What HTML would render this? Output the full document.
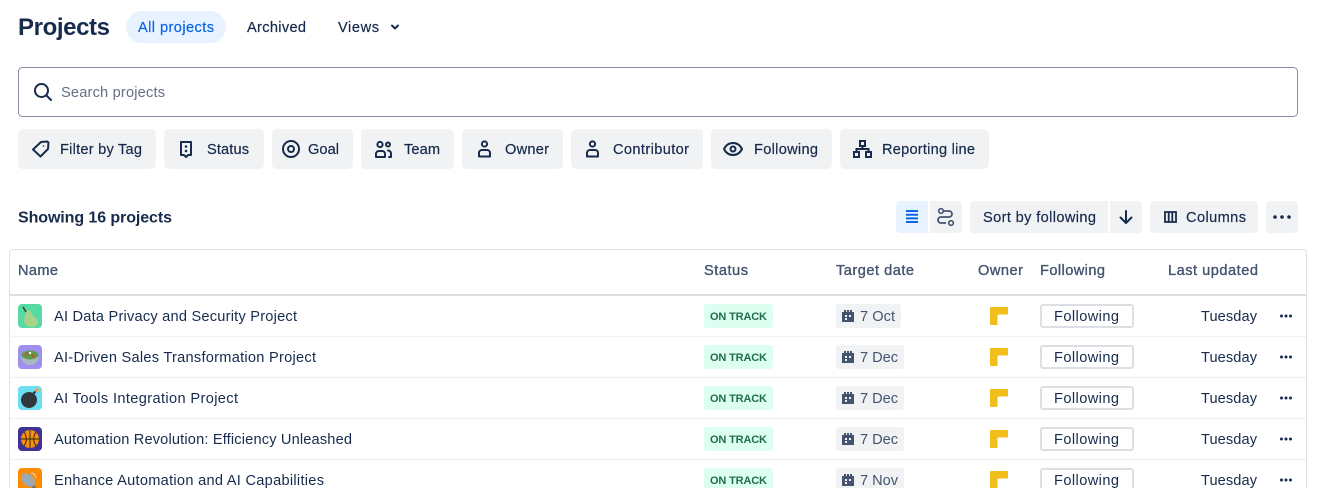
<!DOCTYPE html>
<html><head><meta charset="utf-8"><title>Projects</title>
<style>
html,body{margin:0;padding:0;background:#fff;width:1333px;height:488px;overflow:hidden}
svg{display:block;font-family:"Liberation Sans",sans-serif}
text{fill:#172B4D;font-size:14.6px}
.m{stroke:#172B4D;stroke-width:.2}
.s{font-weight:700}
.h{fill:#44546F;stroke:#44546F;stroke-width:.35}
.i{fill:none;stroke:#172B4D;stroke-width:2;stroke-linecap:round;stroke-linejoin:round}
.b{fill:#F1F2F4}
.l{fill:#DCFFF1}
.lt{fill:#216E4E;font-size:11px;font-weight:700}
.d{fill:#44546F}
</style></head><body>
<svg width="1333" height="488" viewBox="0 0 1333 488" xmlns="http://www.w3.org/2000/svg">
<defs>
<g id="cal"><path fill="#44546F" d="M0 2h2V0h2v2h1V0h2v2h1V0h2v2h2v10H0z"/><path fill="#F1F2F4" d="M3 5h2v2H3zM7 5h2v2H7zM3 8h2v2H3z"/></g>
<path id="logo" fill="#F1BE1C" d="M1 0h16a1 1 0 0 1 1 1v5.500a1 1 0 0 1-1 1H8.500a1 1 0 0 0-1 1V17a1 1 0 0 1-1 1H1a1 1 0 0 1-1-1V1a1 1 0 0 1 1-1z"/>
<g id="more"><circle cx="2" cy="2" r="1.500" fill="#172B4D"/><circle cx="6.500" cy="2" r="1.500" fill="#172B4D"/><circle cx="11" cy="2" r="1.500" fill="#172B4D"/></g>
<g id="person"><circle cx="6.500" cy="3" r="2.600" fill="none" stroke="#172B4D" stroke-width="2"/><path d="M1 15.500v-3.500a3 3 0 0 1 3-3h5a3 3 0 0 1 3 3v3.500z" fill="none" stroke="#172B4D" stroke-width="2" stroke-linejoin="round"/></g>
</defs>

<text x="18" y="35" class="s" style="font-size:24px" textLength="92">Projects</text>
<rect x="126" y="11" width="100" height="32" rx="16" fill="#E9F2FF"/>
<text x="138" y="32" textLength="76" style="fill:#0C66E4;stroke:#0C66E4;stroke-width:.2">All projects</text>
<text x="247" y="32" class="m" textLength="59">Archived</text>
<text x="338" y="32" class="m" textLength="41">Views</text>
<path class="i" d="M392 25.500l3 3 3-3"/>

<rect x="18.500" y="67.500" width="1279" height="49" rx="4" fill="#fff" stroke="#8590A2"/>
<circle cx="41.500" cy="90.500" r="6.500" class="i"/><path class="i" d="M46.500 95.500l4.500 4.500"/>
<text x="61" y="97" textLength="104" style="fill:#626F86">Search projects</text>

<rect class="b" x="18" y="129" width="138" height="40" rx="5"/>
<path class="i" d="M33 149.500l8-7.500 6-.5 1.500 1-.5 6.500-7.500 7.500z"/><circle cx="43.500" cy="146" r=".8" fill="#172B4D"/>
<text x="60" y="154" class="m" textLength="82">Filter by Tag</text>
<rect class="b" x="164" y="129" width="100" height="40" rx="5"/>
<path class="i" d="M181 142h10v13h-3l-2 2-2-2h-3z"/><circle cx="186" cy="146.500" r="1.300" fill="#172B4D"/><circle cx="186" cy="151" r="1.300" fill="#172B4D"/>
<text x="207" y="154" class="m" textLength="42">Status</text>
<rect class="b" x="272" y="129" width="81" height="40" rx="5"/>
<circle cx="291" cy="149" r="8" class="i"/><circle cx="291" cy="149" r="3" class="i"/>
<text x="308" y="154" class="m" textLength="31">Goal</text>
<rect class="b" x="361" y="129" width="93" height="40" rx="5"/>
<circle cx="380" cy="144.500" r="2.600" class="i"/><circle cx="388" cy="144.500" r="2" class="i"/><path class="i" d="M376 157v-3a3 3 0 0 1 3-3h3a3 3 0 0 1 3 3v3zM388 150.500a3 3 0 0 1 3 3v3.500h-2"/>
<text x="404" y="154" class="m" textLength="36">Team</text>
<rect class="b" x="462" y="129" width="101" height="40" rx="5"/>
<use href="#person" x="478" y="141"/>
<text x="505" y="154" class="m" textLength="44">Owner</text>
<rect class="b" x="571" y="129" width="132" height="40" rx="5"/>
<use href="#person" x="586" y="141"/>
<text x="613" y="154" class="m" textLength="76">Contributor</text>
<rect class="b" x="711" y="129" width="121" height="40" rx="5"/>
<path class="i" d="M724 149c2-4 5-6 9-6s7 2 9 6c-2 4-5 6-9 6s-7-2-9-6z"/><circle cx="733" cy="149" r="2.500" class="i"/>
<text x="754" y="154" class="m" textLength="64">Following</text>
<rect class="b" x="840" y="129" width="149" height="40" rx="5"/>
<path d="M860 141h5v5h-5zM854 152h5v5h-5zM866 152h5v5h-5z" fill="none" stroke="#172B4D" stroke-width="2"/><path d="M862.500 146v3M856.500 152v-3h12v3" fill="none" stroke="#172B4D" stroke-width="2"/>
<text x="882" y="154" class="m" textLength="93">Reporting line</text>

<text x="18" y="222.500" class="s" style="font-size:16px" textLength="154">Showing 16 projects</text>
<path d="M900 201h28v32h-28a4 4 0 0 1-4-4v-24a4 4 0 0 1 4-4z" fill="#E9F2FF"/>
<path d="M906 211h12M906 214.700h12M906 218.400h12M906 222h12" stroke="#0C66E4" stroke-width="2"/>
<path class="b" d="M930 201h28a4 4 0 0 1 4 4v24a4 4 0 0 1-4 4h-28z"/>
<path d="M941 211h8a3 3 0 0 1 0 6h-8a3 3 0 0 0 0 6h5" fill="none" stroke="#44546F" stroke-width="1.800"/><circle cx="941" cy="211" r="2.300" fill="#F1F2F4" stroke="#44546F" stroke-width="1.600"/><circle cx="951" cy="223" r="2.300" fill="#F1F2F4" stroke="#44546F" stroke-width="1.600"/>
<path class="b" d="M974 201h134v32h-134a4 4 0 0 1-4-4v-24a4 4 0 0 1 4-4z"/>
<text x="983" y="222" class="m" textLength="113">Sort by following</text>
<path class="b" d="M1110 201h28a4 4 0 0 1 4 4v24a4 4 0 0 1-4 4h-28z"/>
<path class="i" d="M1126 211v12M1120.500 217.500l5.500 5.500 5.500-5.500"/>
<rect class="b" x="1150" y="201" width="108" height="32" rx="4"/>
<path d="M1165 212h11v10h-11zM1168.700 212v10M1172.300 212v10" fill="none" stroke="#172B4D" stroke-width="1.800"/>
<text x="1186" y="222" class="m" textLength="60">Columns</text>
<rect class="b" x="1266" y="201" width="32" height="32" rx="4"/>
<circle cx="1275" cy="217" r="1.800" fill="#172B4D"/><circle cx="1282" cy="217" r="1.800" fill="#172B4D"/><circle cx="1289" cy="217" r="1.800" fill="#172B4D"/>

<path d="M9.500 488V253a3.500 3.500 0 0 1 3.500-3.500h1290.500a3 3 0 0 1 3 3V488" fill="none" stroke="#DCDFE4"/>
<rect x="10" y="294" width="1296" height="2" fill="#DCDFE4"/>
<text x="18" y="275" class="h" textLength="40">Name</text>
<text x="704" y="275" class="h" textLength="44">Status</text>
<text x="836" y="275" class="h" textLength="78">Target date</text>
<text x="978" y="275" class="h" textLength="45">Owner</text>
<text x="1040" y="275" class="h" textLength="65">Following</text>
<text x="1168" y="275" class="h" textLength="90">Last updated</text>
<path d="M10 336.500h1296M10 377.500h1296M10 418.500h1296M10 459.500h1296" stroke="#F1F2F4" stroke-width="1.500"/>

<!-- Row 1 -->
<rect x="18" y="304" width="24" height="24" rx="4" fill="#57D9A3"/>
<path fill="#A6D388" d="M26 311c3-2 5 0 6 3 1 3 5 4 6 7 0 4-3 6-6 6-4 0-8-2-8-7 0-4 2-6 2-9z"/>
<path stroke="#3A3A2C" stroke-width="1.500" d="M23 307l3 5"/>
<text x="54" y="321" textLength="243">AI Data Privacy and Security Project</text>
<rect class="l" x="704" y="304" width="69" height="24" rx="3"/><text class="lt" x="710" y="320" textLength="57">ON TRACK</text>
<rect class="b" x="836" y="304" width="65" height="24" rx="3"/><use href="#cal" x="842" y="310"/><text class="d" x="860" y="321" textLength="35">7 Oct</text>
<use href="#logo" x="990" y="307"/>
<rect x="1041" y="305" width="92" height="22" rx="2" fill="#fff" stroke="#DCDFE4" stroke-width="2"/><text x="1054" y="321" textLength="65">Following</text>
<text x="1201" y="321" textLength="56">Tuesday</text><use href="#more" x="1279.500" y="314"/>

<!-- Row 2 -->
<rect x="18" y="345" width="24" height="24" rx="4" fill="#9F8FEF"/>
<path fill="#AAB8C2" d="M21 356h18c0 5-4 9-9 9s-9-4-9-9z"/>
<ellipse cx="30" cy="355" rx="8.500" ry="4.500" fill="#5E9B4B"/>
<circle cx="27" cy="354" r="1.400" fill="#D0453C"/><circle cx="33" cy="356" r="1.400" fill="#D0453C"/><circle cx="30" cy="353" r="1.100" fill="#fff"/>
<text x="54" y="362" textLength="262">AI-Driven Sales Transformation Project</text>
<rect class="l" x="704" y="345" width="69" height="24" rx="3"/><text class="lt" x="710" y="361" textLength="57">ON TRACK</text>
<rect class="b" x="836" y="345" width="68" height="24" rx="3"/><use href="#cal" x="842" y="351"/><text class="d" x="860" y="362" textLength="38">7 Dec</text>
<use href="#logo" x="990" y="348"/>
<rect x="1041" y="346" width="92" height="22" rx="2" fill="#fff" stroke="#DCDFE4" stroke-width="2"/><text x="1054" y="362" textLength="65">Following</text>
<text x="1201" y="362" textLength="56">Tuesday</text><use href="#more" x="1279.500" y="355"/>

<!-- Row 3 -->
<rect x="18" y="386" width="24" height="24" rx="4" fill="#6CDFF4"/>
<circle cx="29" cy="400" r="8" fill="#31373D"/>
<path d="M33 394l2.500-2.500" stroke="#31373D" stroke-width="2"/>
<circle cx="37" cy="390" r="1.900" fill="#F4A340"/>
<text x="54" y="403" textLength="184">AI Tools Integration Project</text>
<rect class="l" x="704" y="386" width="69" height="24" rx="3"/><text class="lt" x="710" y="402" textLength="57">ON TRACK</text>
<rect class="b" x="836" y="386" width="68" height="24" rx="3"/><use href="#cal" x="842" y="392"/><text class="d" x="860" y="403" textLength="38">7 Dec</text>
<use href="#logo" x="990" y="389"/>
<rect x="1041" y="387" width="92" height="22" rx="2" fill="#fff" stroke="#DCDFE4" stroke-width="2"/><text x="1054" y="403" textLength="65">Following</text>
<text x="1201" y="403" textLength="56">Tuesday</text><use href="#more" x="1279.500" y="396"/>

<!-- Row 4 -->
<rect x="18" y="427" width="24" height="24" rx="4" fill="#403294"/>
<circle cx="30" cy="439" r="9" fill="#F4900C"/>
<path d="M30 430v18M21 439h18M24 432c3 4 3 10 0 14M36 432c-3 4-3 10 0 14" fill="none" stroke="#31251C" stroke-width="1"/>
<text x="54" y="444" textLength="298">Automation Revolution: Efficiency Unleashed</text>
<rect class="l" x="704" y="427" width="69" height="24" rx="3"/><text class="lt" x="710" y="443" textLength="57">ON TRACK</text>
<rect class="b" x="836" y="427" width="68" height="24" rx="3"/><use href="#cal" x="842" y="433"/><text class="d" x="860" y="444" textLength="38">7 Dec</text>
<use href="#logo" x="990" y="430"/>
<rect x="1041" y="428" width="92" height="22" rx="2" fill="#fff" stroke="#DCDFE4" stroke-width="2"/><text x="1054" y="444" textLength="65">Following</text>
<text x="1201" y="444" textLength="56">Tuesday</text><use href="#more" x="1279.500" y="437"/>

<!-- Row 5 -->
<rect x="18" y="468" width="24" height="24" rx="4" fill="#FF8B00"/>
<path stroke="#66757F" stroke-width="3" d="M29 482l6 6"/>
<ellipse cx="28" cy="480" rx="8" ry="5.500" transform="rotate(45 28 480)" fill="#99AAB5"/>
<path d="M31 473a5 5 0 0 1 5 5" fill="none" stroke="#CCD6DD" stroke-width="1"/>
<text x="54" y="485" textLength="270">Enhance Automation and AI Capabilities</text>
<rect class="l" x="704" y="468" width="69" height="24" rx="3"/><text class="lt" x="710" y="484" textLength="57">ON TRACK</text>
<rect class="b" x="836" y="468" width="68" height="24" rx="3"/><use href="#cal" x="842" y="474"/><text class="d" x="860" y="485" textLength="38">7 Nov</text>
<use href="#logo" x="990" y="471"/>
<rect x="1041" y="469" width="92" height="22" rx="2" fill="#fff" stroke="#DCDFE4" stroke-width="2"/><text x="1054" y="485" textLength="65">Following</text>
<text x="1201" y="485" textLength="56">Tuesday</text><use href="#more" x="1279.500" y="478"/>
</svg>
</body></html>
